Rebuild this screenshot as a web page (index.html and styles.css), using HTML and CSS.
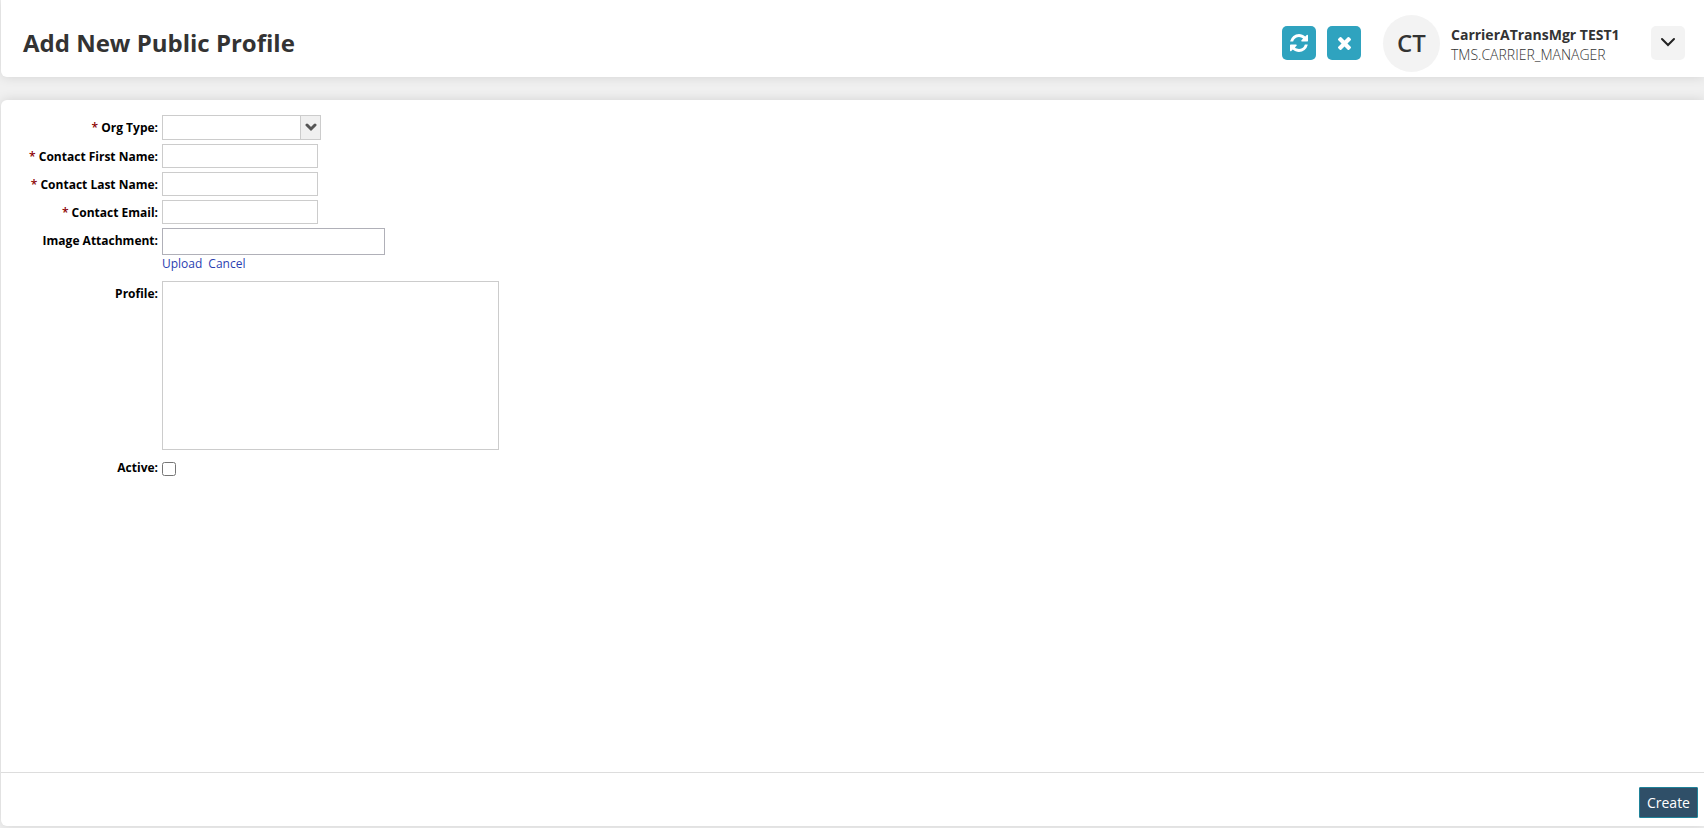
FILE: index.html
```html
<!DOCTYPE html>
<html lang="en">
<head>
    <meta charset="UTF-8">
    <meta name="viewport" content="width=device-width, initial-scale=1.0">
    <title>Add New Public Profile</title>
    <link rel="stylesheet" href="styles.css">
</head>
<body>
    <header class="header">
        <h1>Add New Public Profile</h1>
        <button type="button" class="icon-button" aria-label="Refresh">
            <svg width="18" height="18" viewBox="0 0 1536 1536"><path d="M1511 928q0 5-1 7-64 268-268 434.500t-478 166.500q-146 0-282.500-55t-243.500-157l-129 129q-19 19-45 19t-45-19-19-45v-448q0-26 19-45t45-19h448q26 0 45 19t19 45-19 45l-137 137q71 66 161 102t187 36q134 0 250-65t186-179q11-17 53-117 8-23 30-23h192q13 0 22.500 9.500t9.500 22.500zm25-800v448q0 26-19 45t-45 19h-448q-26 0-45-19t-19-45 19-45l138-138q-148-137-349-137-134 0-250 65t-186 179q-11 17-53 117-8 23-30 23h-199q-13 0-22.500-9.500t-9.500-22.500v-7q65-268 270-434.500t480-166.500q146 0 284 55.500t245 156.500l130-129q19-19 45-19t45 19 19 45z"/></svg>
        </button>
        <button type="button" class="icon-button" aria-label="Close">
            <svg width="13" height="13" viewBox="302 366 1188 1188"><path d="M1490 1322q0 40-28 68l-136 136q-28 28-68 28t-68-28l-294-294-294 294q-28 28-68 28t-68-28l-136-136q-28-28-28-68t28-68l294-294-294-294q-28-28-28-68t28-68l136-136q28-28 68-28t68 28l294 294 294-294q28-28 68-28t68 28l136 136q28 28 28 68t-28 68l-294 294 294 294q28 28 28 68z"/></svg>
        </button>
        <div class="avatar">CT</div>
        <div class="user">
            <div class="user-name">CarrierATransMgr TEST1</div>
            <div class="user-role">TMS.CARRIER_MANAGER</div>
        </div>
        <button type="button" class="icon-button menu-button" aria-label="User menu">
            <svg width="16" height="12" viewBox="0 0 16 12"><path d="M2 2l6 6 6-6"/></svg>
        </button>
    </header>

    <form class="panel">
        <div class="fields">
            <div class="row">
                <label for="org-type"><span class="required">*</span> Org Type:</label>
                <div class="select-box">
                    <select id="org-type" name="org-type" required>
                        <option value=""></option>
                    </select>
                    <span class="select-arrow">
                        <svg width="12" height="10" viewBox="0 0 12 10"><path d="M2 2l4 4 4-4"/></svg>
                    </span>
                </div>
            </div>
            <div class="row">
                <label for="first-name"><span class="required">*</span> Contact First Name:</label>
                <input type="text" id="first-name" name="first-name" required>
            </div>
            <div class="row">
                <label for="last-name"><span class="required">*</span> Contact Last Name:</label>
                <input type="text" id="last-name" name="last-name" required>
            </div>
            <div class="row">
                <label for="email"><span class="required">*</span> Contact Email:</label>
                <input type="text" id="email" name="email" required>
            </div>
            <div class="row attachment">
                <label for="image">Image Attachment:</label>
                <div>
                    <input type="text" id="image" name="image">
                    <div class="links">
                        <a href="#">Upload</a>
                        <a href="#">Cancel</a>
                    </div>
                </div>
            </div>
            <div class="row">
                <label for="profile">Profile:</label>
                <textarea id="profile" name="profile"></textarea>
            </div>
            <div class="row checkbox-row">
                <label for="active">Active:</label>
                <input type="checkbox" id="active" name="active">
            </div>
        </div>
        <div class="footer">
            <button type="submit" class="create">Create</button>
        </div>
    </form>
</body>
</html>
```
FILE: styles.css
```css
* {
    box-sizing: border-box;
}
body {
    font-family: "Open Sans", sans-serif;
    margin: 0;
    padding: 0 0 2px 1px;
    min-height: 100vh;
    display: flex;
    flex-direction: column;
    gap: 23px;
    background-color: #f0f0f0;
    overflow-x: hidden;
}
.header {
    display: flex;
    align-items: center;
    height: 77px;
    padding: 9px 19px 0 22px;
    background-color: #fff;
    border-radius: 0 0 0 6px;
    box-shadow: 0 0 12px rgba(0, 0, 0, 0.12);
}
.header h1 {
    flex: 1;
    margin: 0;
    font-size: 24px;
    font-weight: bold;
    line-height: 32px;
    color: #333;
}
.icon-button {
    display: flex;
    align-items: center;
    justify-content: center;
    width: 34px;
    height: 34px;
    margin-left: 11px;
    padding: 0;
    border: none;
    border-radius: 5px;
    background-color: #2fa3bf;
    cursor: pointer;
}
.icon-button svg {
    fill: #fff;
}
.avatar {
    width: 57px;
    height: 57px;
    margin: 0 11px 0 22px;
    border-radius: 50%;
    background-color: #f3f3f3;
    color: #333;
    font-size: 24px;
    font-weight: 600;
    line-height: 55px;
    text-align: center;
}
.user {
    width: 189px;
    padding-top: 3px;
    line-height: 20px;
    white-space: nowrap;
}
.user-name {
    font-size: 14px;
    font-weight: bold;
    color: #333;
}
.user-role {
    font-size: 14px;
    font-weight: 300;
    color: #333;
}
.menu-button {
    background-color: #f3f3f3;
}
.menu-button svg {
    fill: none;
    stroke: #222;
    stroke-width: 2;
    stroke-linecap: round;
}
.panel {
    flex: 1;
    display: flex;
    flex-direction: column;
    background-color: #fff;
    border-radius: 6px 0 0 6px;
    box-shadow: 0 0 12px rgba(0, 0, 0, 0.12);
}
.fields {
    flex: 1;
    display: flex;
    flex-direction: column;
    gap: 4px;
    padding: 15px 0;
    font-size: 12px;
}
.row {
    display: flex;
    align-items: flex-start;
}
.row label {
    width: 157px;
    margin-right: 4px;
    padding-top: 5px;
    line-height: 16px;
    font-weight: bold;
    text-align: right;
    color: #000;
}
.required {
    color: #8b0000;
    font-weight: 600;
}
.row input,
.row select,
.row textarea {
    display: block;
    margin: 0;
    border: 1px solid #ccc;
    border-radius: 0;
    background-color: #fff;
    font: inherit;
}
.row input {
    width: 156px;
    height: 24px;
}
.select-box {
    display: flex;
    position: relative;
}
.row select {
    appearance: none;
    width: 159px;
    height: 25px;
}
.select-arrow {
    position: absolute;
    top: 0;
    right: 0;
    display: flex;
    align-items: center;
    justify-content: center;
    width: 21px;
    height: 25px;
    border: 1px solid #ccc;
    background-color: #f0f0f0;
    pointer-events: none;
}
.select-arrow svg {
    fill: none;
    stroke: #555;
    stroke-width: 3;
    stroke-linecap: round;
}
.attachment {
    margin-bottom: 5px;
}
.attachment input {
    width: 223px;
    height: 27px;
    border-color: #b0b0b8;
}
.links {
    display: flex;
    gap: 6px;
    padding-top: 1px;
    line-height: 16px;
}
.links a {
    color: #2a3eb1;
    text-decoration: none;
}
.row textarea {
    width: 337px;
    height: 169px;
    resize: none;
}
.checkbox-row {
    margin-top: 1px;
}
.row input[type="checkbox"] {
    width: 14px;
    height: 14px;
    margin-top: 7px;
}
.footer {
    display: flex;
    justify-content: flex-end;
    padding: 14px 6px 8px;
    border-top: 1px solid #ddd;
}
.create {
    height: 31px;
    padding: 0 7px;
    border: 1px solid #1f8299;
    border-radius: 1px;
    background-color: #2f4f68;
    color: #fff;
    font-family: inherit;
    font-size: 14px;
    cursor: pointer;
}
```
